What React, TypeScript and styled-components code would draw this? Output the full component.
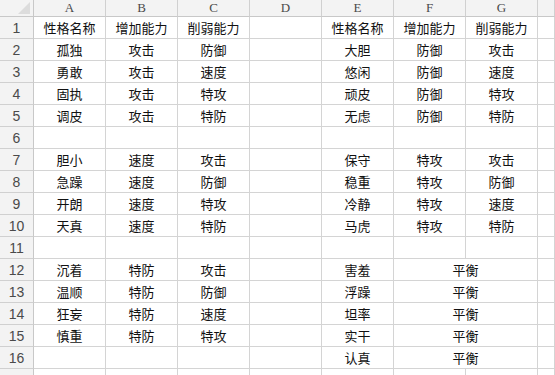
import styled, { createGlobalStyle } from "styled-components";

const GlobalStyle = createGlobalStyle`
    html, body {
        margin: 0;
        padding: 0;
        background: #ffffff;
        overflow: hidden;
    }
`;

const Sheet = styled.div`
    display: grid;
    grid-template-columns: 34px repeat(7, 72px) 1fr;
    grid-template-rows: 17px repeat(17, 22px);
    width: 555px;
    height: 375px;
    overflow: hidden;
    background: #ffffff;
`;

const Corner = styled.div`
    position: relative;
    background: #f3f3f3;
    border-right: 1px solid #c8c8c8;
    border-bottom: 1px solid #c8c8c8;
    &::after {
        content: "";
        position: absolute;
        right: 3px;
        bottom: 2px;
        width: 0;
        height: 0;
        border-left: 12px solid transparent;
        border-bottom: 12px solid #dcdcdc;
    }
`;

const ColHead = styled.div`
    background: #f3f3f3;
    border-right: 1px solid #d0d0d0;
    border-bottom: 1px solid #c8c8c8;
    display: flex;
    align-items: center;
    justify-content: center;
    font-family: "Liberation Serif", serif;
    font-size: 13px;
    color: #4a4a4a;
`;

const RowHead = styled.div`
    background: #f3f3f3;
    border-right: 1px solid #c8c8c8;
    border-bottom: 1px solid #d0d0d0;
    display: flex;
    align-items: center;
    justify-content: center;
    font-family: "Liberation Sans", sans-serif;
    font-size: 14px;
    color: #4a4a4a;
`;

const Cell = styled.div<{ $span?: number }>`
    grid-column: span ${(p) => p.$span ?? 1};
    border-right: 1px solid #d4d4d4;
    border-bottom: 1px solid #d4d4d4;
    display: flex;
    align-items: center;
    justify-content: center;
    font-family: "Noto Sans CJK SC", sans-serif;
    font-size: 13px;
    color: #111111;
    white-space: nowrap;
`;

const cols = ["A", "B", "C", "D", "E", "F", "G", ""];

// each row: cells A..H, [text, span] for a merged cell
const rows: (string | [string, number])[][] = [
    ["性格名称", "增加能力", "削弱能力", "", "性格名称", "增加能力", "削弱能力", ""],
    ["孤独", "攻击", "防御", "", "大胆", "防御", "攻击", ""],
    ["勇敢", "攻击", "速度", "", "悠闲", "防御", "速度", ""],
    ["固执", "攻击", "特攻", "", "顽皮", "防御", "特攻", ""],
    ["调皮", "攻击", "特防", "", "无虑", "防御", "特防", ""],
    ["", "", "", "", "", "", "", ""],
    ["胆小", "速度", "攻击", "", "保守", "特攻", "攻击", ""],
    ["急躁", "速度", "防御", "", "稳重", "特攻", "防御", ""],
    ["开朗", "速度", "特攻", "", "冷静", "特攻", "速度", ""],
    ["天真", "速度", "特防", "", "马虎", "特攻", "特防", ""],
    ["", "", "", "", "", "", "", ""],
    ["沉着", "特防", "攻击", "", "害羞", ["平衡", 2], ""],
    ["温顺", "特防", "防御", "", "浮躁", ["平衡", 2], ""],
    ["狂妄", "特防", "速度", "", "坦率", ["平衡", 2], ""],
    ["慎重", "特防", "特攻", "", "实干", ["平衡", 2], ""],
    ["", "", "", "", "认真", ["平衡", 2], ""],
    ["", "", "", "", "", "", "", ""],
];

function App() {
    return (
        <>
            <GlobalStyle />
            <Sheet>
                <Corner />
                {cols.map((c, i) => (
                    <ColHead key={"h" + i}>{c}</ColHead>
                ))}
                {rows.map((row, r) => [
                    <RowHead key={"r" + r}>{r < 16 ? r + 1 : ""}</RowHead>,
                    ...row.map((cell, c) =>
                        Array.isArray(cell) ? (
                            <Cell key={r + "-" + c} $span={cell[1]}>
                                {cell[0]}
                            </Cell>
                        ) : (
                            <Cell key={r + "-" + c}>{cell}</Cell>
                        )
                    ),
                ])}
            </Sheet>
        </>
    );
}

export default App;
